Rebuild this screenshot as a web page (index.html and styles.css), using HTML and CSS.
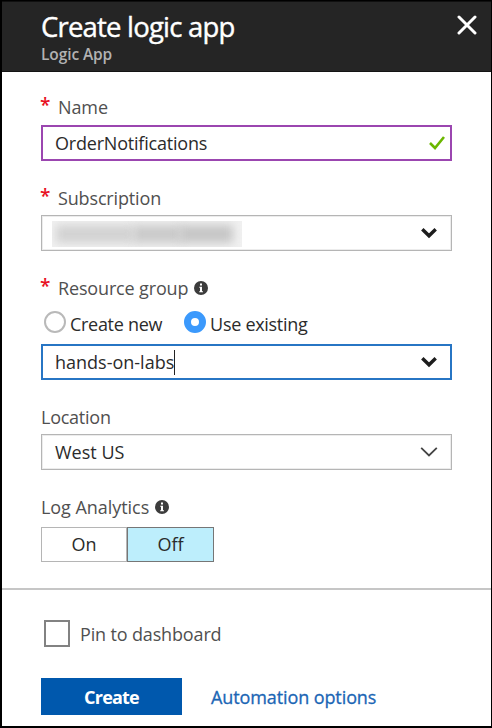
FILE: index.html
```html
<!DOCTYPE html>
<html lang="en">
<head>
<meta charset="utf-8">
<title>Create logic app</title>
<link rel="stylesheet" href="styles.css">
</head>
<body>
<main class="blade">
  <header class="header">
    <div>
      <h1 class="title">Create logic app</h1>
      <p class="subtitle">Logic App</p>
    </div>
    <svg class="close" width="20" height="20" viewBox="0 0 20 20"><path d="M2 2L18 18M18 2L2 18"/></svg>
  </header>
  <form class="form">
    <section class="field">
      <div class="label"><span class="star">*</span><span class="t-name">Name</span></div>
      <div class="box valid"><span class="t-order">OrderNotifications</span>
        <svg class="check" width="16" height="14" viewBox="0 0 16 14"><path d="M1 7L6 12L15 1"/></svg></div>
    </section>
    <section class="field">
      <div class="label"><span class="star">*</span><span class="t-sub">Subscription</span></div>
      <div class="box"><div class="redacted"><i></i><i></i><i></i></div>
        <svg class="chevron bold" width="18" height="12" viewBox="0 0 18 12"><path d="M2.3 2.2L9 8.8L15.7 2.2"/></svg></div>
    </section>
    <section class="field group">
      <div class="label"><span class="star">*</span><span class="t-res">Resource group</span>
        <svg class="info" width="14" height="14" viewBox="0 0 14 14"><circle cx="7" cy="7" r="7"/><path d="M5.3 5.7H8V10.2H9V11.3H5.2V10.2H6V6.8H5.3ZM6 2.5H8V4.4H6Z"/></svg></div>
      <div class="radios">
        <span class="radio"></span><span class="t-new">Create new</span>
        <span class="radio on"></span><span class="t-use">Use existing</span>
      </div>
      <div class="box focus"><span class="t-hands">hands-on-labs</span><span class="caret"></span>
        <svg class="chevron bold" width="18" height="12" viewBox="0 0 18 12"><path d="M2.3 2.2L9 8.8L15.7 2.2"/></svg></div>
    </section>
    <section class="field">
      <div class="label"><span class="t-loc">Location</span></div>
      <div class="box"><span class="t-west">West US</span>
        <svg class="chevron" width="18" height="12" viewBox="0 0 18 12"><path d="M1.2 1.8L9 9.4L16.8 1.8"/></svg></div>
    </section>
    <section class="field">
      <div class="label"><span class="t-log">Log Analytics</span>
        <svg class="info" width="14" height="14" viewBox="0 0 14 14"><circle cx="7" cy="7" r="7"/><path d="M5.3 5.7H8V10.2H9V11.3H5.2V10.2H6V6.8H5.3ZM6 2.5H8V4.4H6Z"/></svg></div>
      <div class="toggle"><span class="option">On</span><span class="option active">Off</span></div>
    </section>
  </form>
  <footer class="footer">
    <div class="pin"><span class="checkbox"></span><span class="t-pin">Pin to dashboard</span></div>
    <div class="actions"><span class="create">Create</span><span class="link">Automation options</span></div>
  </footer>
</main>
</body>
</html>
```
FILE: styles.css
```css
* { box-sizing: border-box; }
body {
  margin: 0;
  font: 18px/24px "Open Sans", "Noto Sans", sans-serif;
  color: #2b2b2b;
  background: #fff;
}
span { white-space: nowrap; }
svg { flex: none; fill: none; }
.blade {
  display: flex;
  flex-direction: column;
  height: 728px;
  border: 1px solid #000;
  border-width: 1px 1px 2px 2px;
}
.header {
  display: flex;
  justify-content: space-between;
  height: 71px;
  padding: 7px 14px 0 39px;
  border-top: 1px solid #101010;
  border-bottom: 1px solid #141414;
  background: #252525;
  color: #fff;
}
.title { margin: 0; font-size: 27.5px; font-weight: 400; line-height: 36px; letter-spacing: -0.8px; -webkit-text-stroke: 0.4px; }
.subtitle { margin: -1px 0 0; font-size: 15.5px; font-weight: 600; line-height: 20px; letter-spacing: -0.1px; color: #b2b2b2; }
.close { margin-top: 6px; stroke: #fff; stroke-width: 3; stroke-linecap: round; }
.form { height: 516px; padding: 23px 39px 0; }
.label { display: flex; align-items: center; height: 24px; color: #505050; }
.star { width: 18px; height: 24px; margin-left: -1px; font-size: 19px; font-weight: 600; line-height: 20px; color: #e81123; }
.field { margin-bottom: 25px; }
.label + .box { margin-top: 5px; }
.label + .valid { margin-top: 6px; }
.box {
  display: flex;
  align-items: center;
  width: 411px;
  height: 36px;
  padding: 0 13px;
  border: 1px solid #b5b5b5;
  outline: 1px solid #ececec;
  outline-offset: -2px;
}
.box svg { margin-left: auto; }
.valid { border: 2px solid #9b46b0; padding: 0 5px 0 12px; outline: 0; }
.focus { border: 2px solid #2775c4; padding: 0 12px; outline: 0; }
.check { stroke: #6bb700; stroke-width: 2.6; }
.chevron { stroke: #444; stroke-width: 1.8; }
.bold { stroke: #1d1d1d; stroke-width: 3.4; }
.t-name { letter-spacing: -0.1px; }
.t-order { letter-spacing: -0.2px; }
.t-sub { letter-spacing: -0.15px; }
.t-res { letter-spacing: -0.15px; }
.t-new { letter-spacing: -0.3px; }
.t-use { letter-spacing: -0.3px; }
.t-loc { letter-spacing: -0.25px; }
.t-log { letter-spacing: -0.05px; }
.t-pin { letter-spacing: -0.15px; }
.redacted { display: flex; align-items: center; width: 190px; height: 26px; margin: 2px 0 0 -3px; padding: 0 9px 0 4px; overflow: hidden; background: #f1f1f1; }
.redacted i { height: 18px; width: 78px; background: #d2d2d2; filter: blur(5px); }
.redacted i + i { width: 49px; margin-left: -1px; background: #cacaca; }
.redacted i:last-child { width: 54px; margin-left: -3px; background: #c6c6c6; }
.info { margin-left: 6px; fill: #3c3c3c; }
.info path { fill: #fff; }
.radios { display: flex; align-items: center; height: 44px; padding-left: 3px; }
.t-new, .t-use { padding-top: 4px; }
.radio { width: 22px; height: 22px; margin-right: 4px; border: 2px solid #b9b9b9; border-radius: 50%; }
.radio.on { margin-left: 22px; border: 7.5px solid #3b99fc; }
.caret { width: 1px; height: 25px; background: #222; }
.toggle { display: flex; margin-top: 8px; }
.option { width: 86px; height: 35px; border: 1px solid #b5b5b5; line-height: 33px; text-align: center; }
.option.active { width: 87px; border: 1px solid #767676; background: #bdeefc; }
.footer { flex: 1; padding: 30px 39px 0; border-top: 2px solid #c6c6c6; }
.pin { display: flex; align-items: center; height: 27px; padding-left: 3px; gap: 10px; color: #505050; }
.checkbox { width: 26px; height: 27px; border: 2px solid #828282; }
.actions { display: flex; align-items: center; margin-top: 31px; gap: 29px; }
.create { width: 141px; height: 37px; background: #0058ad; color: #fff; font-weight: 700; line-height: 38px; text-align: center; letter-spacing: -0.8px; }
.link { padding-top: 1px; color: #1b66b5; letter-spacing: -0.1px; -webkit-text-stroke: 0.3px; }
```
